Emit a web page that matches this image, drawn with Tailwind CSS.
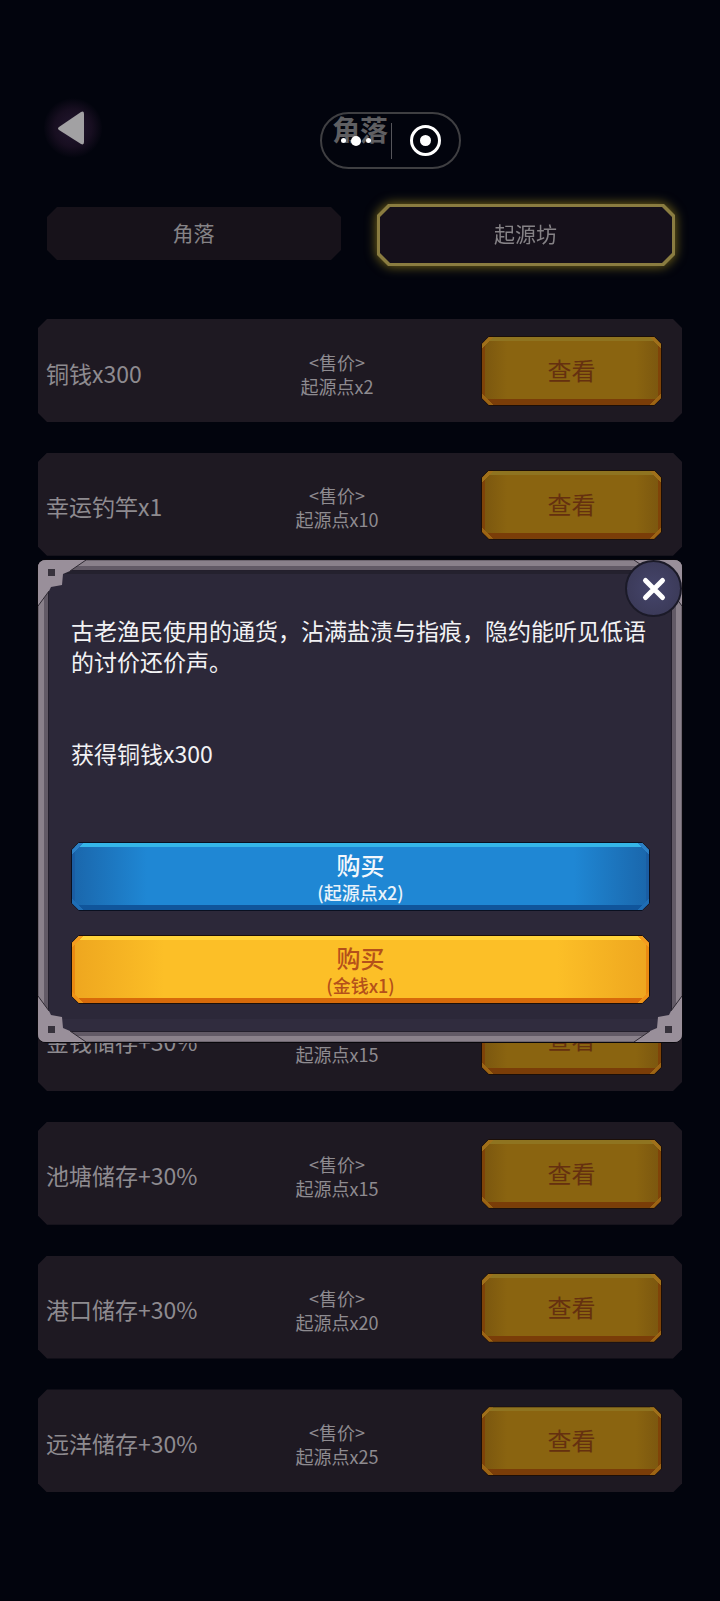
<!DOCTYPE html>
<html lang="zh">
<head>
<meta charset="utf-8">
<script src="https://cdn.jsdelivr.net/npm/@tailwindcss/browser@4"></script>
</head>
<body class="m-0 bg-[#02040d]">
<div class="relative w-[720px] h-[1601px] overflow-hidden bg-[#02040d] font-['Noto_Sans_CJK_SC','Noto_Sans',sans-serif] text-[#8e8b90]">

  <!-- header -->
  <div class="relative h-[204px]">
    <div class="absolute left-[44px] top-[98px] w-[58px] h-[60px] rounded-full bg-[radial-gradient(circle,#241830_0%,#170e20_45%,transparent_72%)]"></div>
    <svg class="absolute left-[56px] top-[110px]" width="30" height="36" viewBox="0 0 30 36"><path d="M25 2 L3 17 Q1 18.500 3 20 L25 34 Q28 35.500 28 32 L28 4 Q28 0.500 25 2 Z" fill="#a2a1a3"/></svg>
    <div class="absolute left-[332px] top-[109px] text-[28px] leading-[40px] font-bold text-[#5f5f62]">角落</div>
    <div class="absolute left-[320px] top-[112px] w-[141px] h-[57px] rounded-full border-2 border-[#3f3f42] flex items-center">
      <div class="w-[67px] h-full flex items-center justify-center gap-[5px]">
        <span class="w-[5px] h-[5px] rounded-full bg-white"></span>
        <span class="w-[10px] h-[10px] rounded-full bg-white"></span>
        <span class="w-[5px] h-[5px] rounded-full bg-white"></span>
      </div>
      <div class="w-px h-[36px] ml-[2px] bg-[#55555a]"></div>
      <div class="flex-1 flex items-center justify-center">
        <div class="w-[31px] h-[31px] rounded-full border-[3px] border-white flex items-center justify-center">
          <span class="w-[11px] h-[11px] rounded-full bg-white"></span>
        </div>
      </div>
    </div>
  </div>

  <!-- tabs -->
  <div class="relative h-[115px]">
    <div class="absolute left-[47px] top-[3px] w-[294px] h-[53px] pb-[2px] pr-px bg-[#17121a] flex items-center justify-center text-[21px] text-[#858286] [clip-path:polygon(10px_0,calc(100%-10px)_0,100%_10px,100%_calc(100%-10px),calc(100%-10px)_100%,10px_100%,0_calc(100%-10px),0_10px)]">角落</div>
    <div class="absolute left-[377px] top-0 w-[298px] h-[62px] drop-shadow-[0_0_6px_#84721c]">
      <div class="w-full h-full p-[3px] bg-[#8a7c40] [clip-path:polygon(11px_0,calc(100%-11px)_0,100%_11px,100%_calc(100%-11px),calc(100%-11px)_100%,11px_100%,0_calc(100%-11px),0_11px)]">
        <div class="w-full h-full pb-[2px] pr-px bg-[#15101a] flex items-center justify-center text-[21px] text-[#858286] [clip-path:polygon(10px_0,calc(100%-10px)_0,100%_10px,100%_calc(100%-10px),calc(100%-10px)_100%,10px_100%,0_calc(100%-10px),0_10px)]">起源坊</div>
      </div>
    </div>
  </div>

  <!-- list -->
  <div class="flex flex-col gap-[30.8px] ml-[38px] w-[644px]">
    <div class="h-[103px] bg-[#1e1922] flex items-center pl-[8px] pr-[20px] [clip-path:polygon(9px_0,calc(100%-9px)_0,100%_9px,100%_calc(100%-9px),calc(100%-9px)_100%,9px_100%,0_calc(100%-9px),0_9px)]">
      <div class="w-[200px] text-[23px] leading-[32px] pt-[4px]">铜钱x300</div>
      <div class="w-[182px] pt-[6px] text-center text-[18px] leading-[24px]"><div>&lt;售价&gt;</div><div>起源点x2</div></div>
      <div class="ml-auto w-[181px] h-[70px] mt-[1px] p-px bg-[#1c0f08] [clip-path:polygon(8px_0,calc(100%-8px)_0,100%_8px,100%_calc(100%-8px),calc(100%-8px)_100%,8px_100%,0_calc(100%-8px),0_8px)]">
        <div class="w-full h-full flex items-center justify-center pb-[2px] text-[24px] text-[#65300f] bg-[linear-gradient(135deg,#a0701a_8px,transparent_8px),linear-gradient(225deg,#a0701a_8px,transparent_8px),linear-gradient(45deg,#9c6414_8px,transparent_8px),linear-gradient(315deg,#9c6414_8px,transparent_8px),linear-gradient(180deg,#8f7420_4px,transparent_4px),linear-gradient(0deg,#7a3d08_6px,transparent_6px),linear-gradient(90deg,#7f4308_3px,transparent_3px),linear-gradient(270deg,#7f4308_3px,transparent_3px),linear-gradient(90deg,#7a560f_0%,#8a6410_14%,#8a6410_86%,#7a560f_100%)] [clip-path:polygon(7px_0,calc(100%-7px)_0,100%_7px,100%_calc(100%-7px),calc(100%-7px)_100%,7px_100%,0_calc(100%-7px),0_7px)]">查看</div>
      </div>
    </div>
    <div class="h-[103px] bg-[#1e1922] flex items-center pl-[8px] pr-[20px] [clip-path:polygon(9px_0,calc(100%-9px)_0,100%_9px,100%_calc(100%-9px),calc(100%-9px)_100%,9px_100%,0_calc(100%-9px),0_9px)]">
      <div class="w-[200px] text-[23px] leading-[32px] pt-[4px]">幸运钓竿x1</div>
      <div class="w-[182px] pt-[6px] text-center text-[18px] leading-[24px]"><div>&lt;售价&gt;</div><div>起源点x10</div></div>
      <div class="ml-auto w-[181px] h-[70px] mt-[1px] p-px bg-[#1c0f08] [clip-path:polygon(8px_0,calc(100%-8px)_0,100%_8px,100%_calc(100%-8px),calc(100%-8px)_100%,8px_100%,0_calc(100%-8px),0_8px)]">
        <div class="w-full h-full flex items-center justify-center pb-[2px] text-[24px] text-[#65300f] bg-[linear-gradient(135deg,#a0701a_8px,transparent_8px),linear-gradient(225deg,#a0701a_8px,transparent_8px),linear-gradient(45deg,#9c6414_8px,transparent_8px),linear-gradient(315deg,#9c6414_8px,transparent_8px),linear-gradient(180deg,#8f7420_4px,transparent_4px),linear-gradient(0deg,#7a3d08_6px,transparent_6px),linear-gradient(90deg,#7f4308_3px,transparent_3px),linear-gradient(270deg,#7f4308_3px,transparent_3px),linear-gradient(90deg,#7a560f_0%,#8a6410_14%,#8a6410_86%,#7a560f_100%)] [clip-path:polygon(7px_0,calc(100%-7px)_0,100%_7px,100%_calc(100%-7px),calc(100%-7px)_100%,7px_100%,0_calc(100%-7px),0_7px)]">查看</div>
      </div>
    </div>
    <div class="h-[103px] bg-[#1e1922]"></div>
    <div class="h-[103px] bg-[#1e1922]"></div>
    <div class="h-[103px] bg-[#1e1922]"></div>
    <div class="h-[103px] bg-[#1e1922] flex items-center pl-[8px] pr-[20px] [clip-path:polygon(9px_0,calc(100%-9px)_0,100%_9px,100%_calc(100%-9px),calc(100%-9px)_100%,9px_100%,0_calc(100%-9px),0_9px)]">
      <div class="w-[200px] text-[23px] leading-[32px] pt-[4px]">金钱储存+30%</div>
      <div class="w-[182px] pt-[6px] text-center text-[18px] leading-[24px]"><div>&lt;售价&gt;</div><div>起源点x15</div></div>
      <div class="ml-auto w-[181px] h-[70px] mt-[1px] p-px bg-[#1c0f08] [clip-path:polygon(8px_0,calc(100%-8px)_0,100%_8px,100%_calc(100%-8px),calc(100%-8px)_100%,8px_100%,0_calc(100%-8px),0_8px)]">
        <div class="w-full h-full flex items-center justify-center pb-[2px] text-[24px] text-[#65300f] bg-[linear-gradient(135deg,#a0701a_8px,transparent_8px),linear-gradient(225deg,#a0701a_8px,transparent_8px),linear-gradient(45deg,#9c6414_8px,transparent_8px),linear-gradient(315deg,#9c6414_8px,transparent_8px),linear-gradient(180deg,#8f7420_4px,transparent_4px),linear-gradient(0deg,#7a3d08_6px,transparent_6px),linear-gradient(90deg,#7f4308_3px,transparent_3px),linear-gradient(270deg,#7f4308_3px,transparent_3px),linear-gradient(90deg,#7a560f_0%,#8a6410_14%,#8a6410_86%,#7a560f_100%)] [clip-path:polygon(7px_0,calc(100%-7px)_0,100%_7px,100%_calc(100%-7px),calc(100%-7px)_100%,7px_100%,0_calc(100%-7px),0_7px)]">查看</div>
      </div>
    </div>
    <div class="h-[103px] bg-[#1e1922] flex items-center pl-[8px] pr-[20px] [clip-path:polygon(9px_0,calc(100%-9px)_0,100%_9px,100%_calc(100%-9px),calc(100%-9px)_100%,9px_100%,0_calc(100%-9px),0_9px)]">
      <div class="w-[200px] text-[23px] leading-[32px] pt-[4px]">池塘储存+30%</div>
      <div class="w-[182px] pt-[6px] text-center text-[18px] leading-[24px]"><div>&lt;售价&gt;</div><div>起源点x15</div></div>
      <div class="ml-auto w-[181px] h-[70px] mt-[1px] p-px bg-[#1c0f08] [clip-path:polygon(8px_0,calc(100%-8px)_0,100%_8px,100%_calc(100%-8px),calc(100%-8px)_100%,8px_100%,0_calc(100%-8px),0_8px)]">
        <div class="w-full h-full flex items-center justify-center pb-[2px] text-[24px] text-[#65300f] bg-[linear-gradient(135deg,#a0701a_8px,transparent_8px),linear-gradient(225deg,#a0701a_8px,transparent_8px),linear-gradient(45deg,#9c6414_8px,transparent_8px),linear-gradient(315deg,#9c6414_8px,transparent_8px),linear-gradient(180deg,#8f7420_4px,transparent_4px),linear-gradient(0deg,#7a3d08_6px,transparent_6px),linear-gradient(90deg,#7f4308_3px,transparent_3px),linear-gradient(270deg,#7f4308_3px,transparent_3px),linear-gradient(90deg,#7a560f_0%,#8a6410_14%,#8a6410_86%,#7a560f_100%)] [clip-path:polygon(7px_0,calc(100%-7px)_0,100%_7px,100%_calc(100%-7px),calc(100%-7px)_100%,7px_100%,0_calc(100%-7px),0_7px)]">查看</div>
      </div>
    </div>
    <div class="h-[103px] bg-[#1e1922] flex items-center pl-[8px] pr-[20px] [clip-path:polygon(9px_0,calc(100%-9px)_0,100%_9px,100%_calc(100%-9px),calc(100%-9px)_100%,9px_100%,0_calc(100%-9px),0_9px)]">
      <div class="w-[200px] text-[23px] leading-[32px] pt-[4px]">港口储存+30%</div>
      <div class="w-[182px] pt-[6px] text-center text-[18px] leading-[24px]"><div>&lt;售价&gt;</div><div>起源点x20</div></div>
      <div class="ml-auto w-[181px] h-[70px] mt-[1px] p-px bg-[#1c0f08] [clip-path:polygon(8px_0,calc(100%-8px)_0,100%_8px,100%_calc(100%-8px),calc(100%-8px)_100%,8px_100%,0_calc(100%-8px),0_8px)]">
        <div class="w-full h-full flex items-center justify-center pb-[2px] text-[24px] text-[#65300f] bg-[linear-gradient(135deg,#a0701a_8px,transparent_8px),linear-gradient(225deg,#a0701a_8px,transparent_8px),linear-gradient(45deg,#9c6414_8px,transparent_8px),linear-gradient(315deg,#9c6414_8px,transparent_8px),linear-gradient(180deg,#8f7420_4px,transparent_4px),linear-gradient(0deg,#7a3d08_6px,transparent_6px),linear-gradient(90deg,#7f4308_3px,transparent_3px),linear-gradient(270deg,#7f4308_3px,transparent_3px),linear-gradient(90deg,#7a560f_0%,#8a6410_14%,#8a6410_86%,#7a560f_100%)] [clip-path:polygon(7px_0,calc(100%-7px)_0,100%_7px,100%_calc(100%-7px),calc(100%-7px)_100%,7px_100%,0_calc(100%-7px),0_7px)]">查看</div>
      </div>
    </div>
    <div class="h-[103px] bg-[#1e1922] flex items-center pl-[8px] pr-[20px] [clip-path:polygon(9px_0,calc(100%-9px)_0,100%_9px,100%_calc(100%-9px),calc(100%-9px)_100%,9px_100%,0_calc(100%-9px),0_9px)]">
      <div class="w-[200px] text-[23px] leading-[32px] pt-[4px]">远洋储存+30%</div>
      <div class="w-[182px] pt-[6px] text-center text-[18px] leading-[24px]"><div>&lt;售价&gt;</div><div>起源点x25</div></div>
      <div class="ml-auto w-[181px] h-[70px] mt-[1px] p-px bg-[#1c0f08] [clip-path:polygon(8px_0,calc(100%-8px)_0,100%_8px,100%_calc(100%-8px),calc(100%-8px)_100%,8px_100%,0_calc(100%-8px),0_8px)]">
        <div class="w-full h-full flex items-center justify-center pb-[2px] text-[24px] text-[#65300f] bg-[linear-gradient(135deg,#a0701a_8px,transparent_8px),linear-gradient(225deg,#a0701a_8px,transparent_8px),linear-gradient(45deg,#9c6414_8px,transparent_8px),linear-gradient(315deg,#9c6414_8px,transparent_8px),linear-gradient(180deg,#8f7420_4px,transparent_4px),linear-gradient(0deg,#7a3d08_6px,transparent_6px),linear-gradient(90deg,#7f4308_3px,transparent_3px),linear-gradient(270deg,#7f4308_3px,transparent_3px),linear-gradient(90deg,#7a560f_0%,#8a6410_14%,#8a6410_86%,#7a560f_100%)] [clip-path:polygon(7px_0,calc(100%-7px)_0,100%_7px,100%_calc(100%-7px),calc(100%-7px)_100%,7px_100%,0_calc(100%-7px),0_7px)]">查看</div>
      </div>
    </div>
  </div>

  <!-- modal -->
  <div class="absolute left-[38px] top-[560px] w-[644px] h-[482px] rounded-[8px] bg-[#8a818b] shadow-[0_0_0_1px_#08070b,inset_0_0_0_1px_#6e6670] p-[11px]">
    <div class="w-full h-full rounded-[3px] bg-[#2c2839] shadow-[0_0_0_1px_#231f2c,0_0_0_5px_#625a66,inset_0_3px_0_#24212e,inset_0_-12px_0_#302c3e] pl-[22px] pr-[24px] pt-[44px] text-white">
      <div class="text-[23px] leading-[31px] w-[580px] text-[#f2f2f4]">古老渔民使用的通货，沾满盐渍与指痕，隐约能听见低语的讨价还价声。</div>
      <div class="text-[23px] leading-[31px] mt-[61px] text-[#f2f2f4]">获得铜钱x300</div>
      <div class="mt-[73px] w-[579px] h-[69px] p-px bg-[#0a1020] [clip-path:polygon(8px_0,calc(100%-8px)_0,100%_8px,100%_calc(100%-8px),calc(100%-8px)_100%,8px_100%,0_calc(100%-8px),0_8px)]">
        <div class="w-full h-full flex flex-col items-center justify-center bg-[linear-gradient(135deg,#2c80c6_8px,transparent_8px),linear-gradient(225deg,#2c80c6_8px,transparent_8px),linear-gradient(45deg,#1f6db4_8px,transparent_8px),linear-gradient(315deg,#1f6db4_8px,transparent_8px),linear-gradient(180deg,#35b6e8_4px,transparent_4px),linear-gradient(0deg,#10559b_5px,transparent_5px),linear-gradient(90deg,#1a5da3_3px,transparent_3px),linear-gradient(270deg,#1a5da3_3px,transparent_3px),linear-gradient(90deg,#1a66ab_0%,#1f87d4_13%,#1f87d4_87%,#1a66ab_100%)] [clip-path:polygon(7px_0,calc(100%-7px)_0,100%_7px,100%_calc(100%-7px),calc(100%-7px)_100%,7px_100%,0_calc(100%-7px),0_7px)]">
          <div class="text-[24px] leading-[30px] font-medium text-[#f4f8fc]">购买</div>
          <div class="text-[18px] leading-[24px] font-medium text-[#eaf3fa]">(起源点x2)</div>
        </div>
      </div>
      <div class="mt-[24px] w-[579px] h-[69px] p-px bg-[#1c1008] [clip-path:polygon(8px_0,calc(100%-8px)_0,100%_8px,100%_calc(100%-8px),calc(100%-8px)_100%,8px_100%,0_calc(100%-8px),0_8px)]">
        <div class="w-full h-full flex flex-col items-center justify-center bg-[linear-gradient(135deg,#f59c1e_8px,transparent_8px),linear-gradient(225deg,#f59c1e_8px,transparent_8px),linear-gradient(45deg,#ee9318_8px,transparent_8px),linear-gradient(315deg,#ee9318_8px,transparent_8px),linear-gradient(180deg,#ffd43a_4px,transparent_4px),linear-gradient(0deg,#d76a0a_5px,transparent_5px),linear-gradient(90deg,#ea8a12_3px,transparent_3px),linear-gradient(270deg,#ea8a12_3px,transparent_3px),linear-gradient(90deg,#eea61f_0%,#fcbf27_16%,#fcbf27_84%,#eea61f_100%)] [clip-path:polygon(7px_0,calc(100%-7px)_0,100%_7px,100%_calc(100%-7px),calc(100%-7px)_100%,7px_100%,0_calc(100%-7px),0_7px)]">
          <div class="text-[24px] leading-[30px] font-medium text-[#b4501a]">购买</div>
          <div class="text-[18px] leading-[24px] font-medium text-[#b4501a]">(金钱x1)</div>
        </div>
      </div>
    </div>
    <!-- corner plates -->
    <svg class="absolute left-0 top-0" width="50" height="50" viewBox="0 0 50 50"><path d="M0 8 Q0 0 8 0 L48 0 L32 11 L25 14 L24 25 L13 27 L11 31 L0 46 Z" fill="#998f9a"/><path d="M48 0 L32 11 M0 46 L11 31" stroke="#2f2a33" stroke-width="1"/><rect x="10" y="9" width="7" height="7" fill="#37323c"/></svg>
    <svg class="absolute left-0 bottom-0 -scale-y-100" width="50" height="50" viewBox="0 0 50 50"><path d="M0 8 Q0 0 8 0 L48 0 L32 11 L25 14 L24 25 L13 27 L11 31 L0 46 Z" fill="#998f9a"/><path d="M48 0 L32 11 M0 46 L11 31" stroke="#2f2a33" stroke-width="1"/><rect x="10" y="9" width="7" height="7" fill="#37323c"/></svg>
    <svg class="absolute right-0 top-0 -scale-x-100" width="50" height="50" viewBox="0 0 50 50"><path d="M0 8 Q0 0 8 0 L48 0 L32 11 L25 14 L24 25 L13 27 L11 31 L0 46 Z" fill="#998f9a"/><path d="M48 0 L32 11 M0 46 L11 31" stroke="#2f2a33" stroke-width="1"/><rect x="10" y="9" width="7" height="7" fill="#37323c"/></svg>
    <svg class="absolute right-0 bottom-0 -scale-x-100 -scale-y-100" width="50" height="50" viewBox="0 0 50 50"><path d="M0 8 Q0 0 8 0 L48 0 L32 11 L25 14 L24 25 L13 27 L11 31 L0 46 Z" fill="#998f9a"/><path d="M48 0 L32 11 M0 46 L11 31" stroke="#2f2a33" stroke-width="1"/><rect x="10" y="9" width="7" height="7" fill="#37323c"/></svg>
    <!-- close -->
    <div class="absolute right-0 top-0 w-[57px] h-[57px] rounded-full bg-[radial-gradient(circle,#45456b_0%,#3c3b5a_70%)] border-2 border-[#1b1a28] flex items-center justify-center">
      <svg width="26" height="26" viewBox="0 0 26 26"><path d="M4.500 4.500 L21.500 21.500 M21.500 4.500 L4.500 21.500" stroke="#fff" stroke-width="5" stroke-linecap="round"/></svg>
    </div>
  </div>
</div>
</body>
</html>
